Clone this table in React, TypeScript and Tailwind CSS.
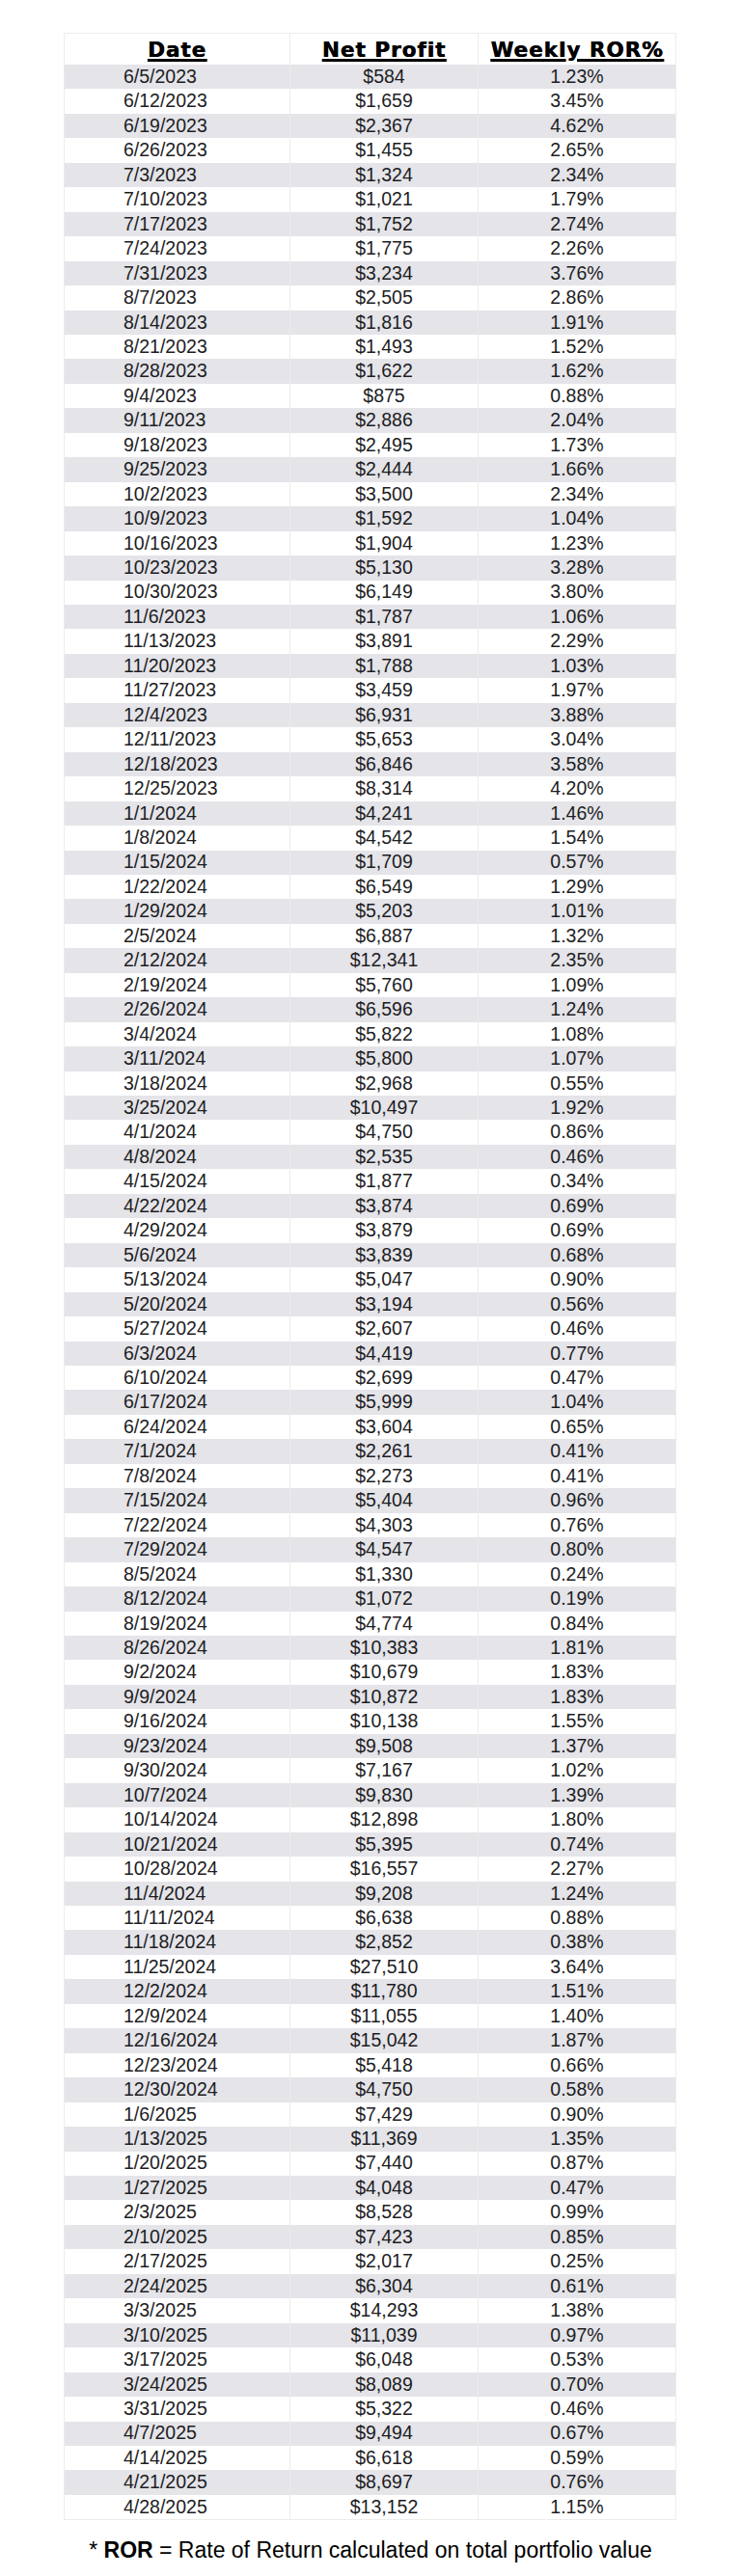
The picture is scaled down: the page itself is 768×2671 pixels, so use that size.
import React from 'react';

const RAW = `6/5/2023|$584|1.23%
6/12/2023|$1,659|3.45%
6/19/2023|$2,367|4.62%
6/26/2023|$1,455|2.65%
7/3/2023|$1,324|2.34%
7/10/2023|$1,021|1.79%
7/17/2023|$1,752|2.74%
7/24/2023|$1,775|2.26%
7/31/2023|$3,234|3.76%
8/7/2023|$2,505|2.86%
8/14/2023|$1,816|1.91%
8/21/2023|$1,493|1.52%
8/28/2023|$1,622|1.62%
9/4/2023|$875|0.88%
9/11/2023|$2,886|2.04%
9/18/2023|$2,495|1.73%
9/25/2023|$2,444|1.66%
10/2/2023|$3,500|2.34%
10/9/2023|$1,592|1.04%
10/16/2023|$1,904|1.23%
10/23/2023|$5,130|3.28%
10/30/2023|$6,149|3.80%
11/6/2023|$1,787|1.06%
11/13/2023|$3,891|2.29%
11/20/2023|$1,788|1.03%
11/27/2023|$3,459|1.97%
12/4/2023|$6,931|3.88%
12/11/2023|$5,653|3.04%
12/18/2023|$6,846|3.58%
12/25/2023|$8,314|4.20%
1/1/2024|$4,241|1.46%
1/8/2024|$4,542|1.54%
1/15/2024|$1,709|0.57%
1/22/2024|$6,549|1.29%
1/29/2024|$5,203|1.01%
2/5/2024|$6,887|1.32%
2/12/2024|$12,341|2.35%
2/19/2024|$5,760|1.09%
2/26/2024|$6,596|1.24%
3/4/2024|$5,822|1.08%
3/11/2024|$5,800|1.07%
3/18/2024|$2,968|0.55%
3/25/2024|$10,497|1.92%
4/1/2024|$4,750|0.86%
4/8/2024|$2,535|0.46%
4/15/2024|$1,877|0.34%
4/22/2024|$3,874|0.69%
4/29/2024|$3,879|0.69%
5/6/2024|$3,839|0.68%
5/13/2024|$5,047|0.90%
5/20/2024|$3,194|0.56%
5/27/2024|$2,607|0.46%
6/3/2024|$4,419|0.77%
6/10/2024|$2,699|0.47%
6/17/2024|$5,999|1.04%
6/24/2024|$3,604|0.65%
7/1/2024|$2,261|0.41%
7/8/2024|$2,273|0.41%
7/15/2024|$5,404|0.96%
7/22/2024|$4,303|0.76%
7/29/2024|$4,547|0.80%
8/5/2024|$1,330|0.24%
8/12/2024|$1,072|0.19%
8/19/2024|$4,774|0.84%
8/26/2024|$10,383|1.81%
9/2/2024|$10,679|1.83%
9/9/2024|$10,872|1.83%
9/16/2024|$10,138|1.55%
9/23/2024|$9,508|1.37%
9/30/2024|$7,167|1.02%
10/7/2024|$9,830|1.39%
10/14/2024|$12,898|1.80%
10/21/2024|$5,395|0.74%
10/28/2024|$16,557|2.27%
11/4/2024|$9,208|1.24%
11/11/2024|$6,638|0.88%
11/18/2024|$2,852|0.38%
11/25/2024|$27,510|3.64%
12/2/2024|$11,780|1.51%
12/9/2024|$11,055|1.40%
12/16/2024|$15,042|1.87%
12/23/2024|$5,418|0.66%
12/30/2024|$4,750|0.58%
1/6/2025|$7,429|0.90%
1/13/2025|$11,369|1.35%
1/20/2025|$7,440|0.87%
1/27/2025|$4,048|0.47%
2/3/2025|$8,528|0.99%
2/10/2025|$7,423|0.85%
2/17/2025|$2,017|0.25%
2/24/2025|$6,304|0.61%
3/3/2025|$14,293|1.38%
3/10/2025|$11,039|0.97%
3/17/2025|$6,048|0.53%
3/24/2025|$8,089|0.70%
3/31/2025|$5,322|0.46%
4/7/2025|$9,494|0.67%
4/14/2025|$6,618|0.59%
4/21/2025|$8,697|0.76%
4/28/2025|$13,152|1.15%`;

const rows = RAW.split('\n').map((line) => {
  const [date, profit, ror] = line.split('|');
  return { date, profit, ror };
});

// heavy condensed-ish header: DejaVu bold, thickened a touch
const headCell =
  "flex items-center justify-center pt-[2px] font-['DejaVu_Sans',sans-serif] font-bold text-[21.5px] tracking-[1px] text-black [text-shadow:0.6px_0_0_#000]";
const headLabel = 'underline decoration-[2.5px] underline-offset-[2px] leading-none';

export default function App() {
  return (
    <div className="min-h-[2671px] bg-white pt-[34px] font-['Liberation_Sans',Arial,sans-serif] text-[#1d1d1f]">
      <div className="ml-[66px] w-[635px] border border-[#ececec]">
        {/* header */}
        <div className="grid grid-cols-[234px_195px_204px] h-[32px]">
          <div className={`${headCell} border-r border-[#ececec]`}>
            <span className={headLabel}>Date</span>
          </div>
          <div className={`${headCell} border-r border-[#ececec]`}>
            <span className={headLabel}>Net Profit</span>
          </div>
          <div className={headCell}>
            <span className={headLabel}>Weekly ROR%</span>
          </div>
        </div>

        {rows.map((r, i) => (
          <div
            key={r.date}
            className={`grid grid-cols-[234px_195px_204px] h-[25.46px] text-[19.5px] leading-none ${
              i % 2 === 0 ? 'bg-[#e4e4e9]' : 'bg-white'
            }`}
          >
            <div className="flex items-center pl-[61px] border-r border-[#ececec]">{r.date}</div>
            <div className="flex items-center justify-center border-r border-[#ececec]">{r.profit}</div>
            <div className="flex items-center justify-center">{r.ror}</div>
          </div>
        ))}
      </div>

      <p className="mt-[20px] text-center text-[23px] leading-none text-black">
        * <span className="font-bold">ROR</span> = Rate of Return calculated on total portfolio value
      </p>
    </div>
  );
}
